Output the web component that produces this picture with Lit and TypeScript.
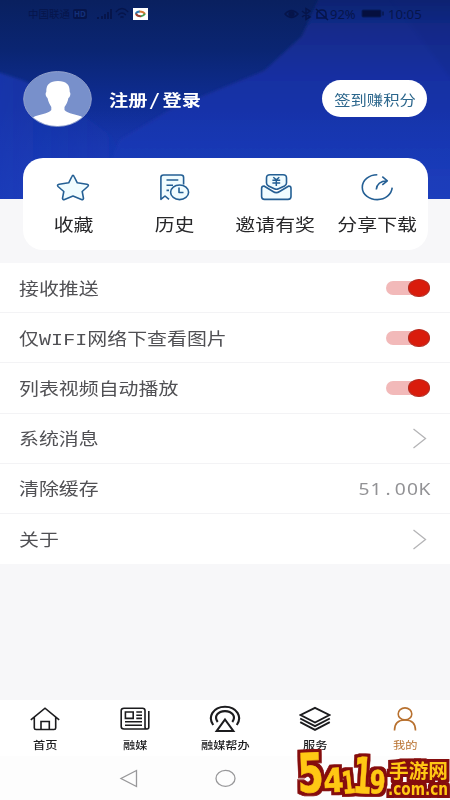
import { LitElement, html, svg, css } from "lit";
import { customElement, property } from "lit/decorators.js";
import { classMap } from "lit/directives/class-map.js";

const starIcon = html`<svg width="34" height="28" viewBox="0 0 34 28">
  <path class="soft" d="M17 2.4 Q17.6 2.4 18.1 3.5 L21.3 9.8 L30.8 11.2 Q33.4 12 31.8 13.5 L26.2 18.5 L27.5 25.4 Q27.3 27.2 25.4 26.4 L17 23 L8.6 26.4 Q6.7 27.2 6.5 25.4 L7.8 18.5 L2 13.5 Q0.6 12 3.2 11.2 L12.7 9.8 L15.9 3.5 Q16.4 2.4 17 2.4Z"/></svg>`;
const historyIcon = html`<svg width="34" height="28" viewBox="0 0 34 28">
  <path class="soft" d="M12 26.4 L8 23 L3.9 26.3 V4.5 Q3.9 2 6.5 2 H24 Q26.6 2 26.6 4.5 V11.5"/>
  <path class="soft" d="M9.5 7 H21.3 M9.5 12.2 H16 M9.5 17.4 H12"/>
  <ellipse class="soft" cx="22.6" cy="19.3" rx="9" ry="7.3"/>
  <path class="soft" d="M22 14.6 V19.5 H26.5"/></svg>`;
const inviteIcon = html`<svg width="34" height="28" viewBox="0 0 34 28">
  <path class="soft" d="M5 13 Q2.6 13 2.6 15.5 V23.5 Q2.6 26.4 5.5 26.4 H29 Q32 26.4 32 23.5 V15.5 Q32 13 29.8 13 L20.6 18.5 Q17.3 20.8 14 18.5Z"/>
  <path class="soft" d="M9.5 13 Q7.5 12 7.5 10 V5 Q7.5 1.8 11 1.8 H24 Q27.5 1.8 27.5 5 V10 Q27.5 12 25.5 13 L19.5 15.8 Q17.4 16.8 15.3 15.8Z"/>
  <path class="yen" d="M14.3 4.2 L17.3 6.8 L20.3 4.2 M13.4 7.3 H21.2 M13.4 10 H21.2 M17.3 7 V13"/></svg>`;
const shareIcon = html`<svg width="34" height="28" viewBox="0 0 34 28">
  <path class="line" d="M17.3 1.8 C8.8 1.8 2.3 7.3 2.3 14.4 C2.3 21.3 9 26.6 17.3 26.6 C25.5 26.6 31.4 21.6 32.2 14.7"/>
  <path class="line" d="M16.3 16.5 C16.8 11 19.6 8.3 27 7.8 M22.3 3.7 L27.3 7.8 L22.3 11.8"/></svg>`;

const homeIcon = html`<svg width="32" height="28" viewBox="0 0 32 28">
  <path d="M1.8 14.8 L16 3.2 L30.2 14.8 M5.3 12.5 V23 Q5.3 24.5 7 24.5 H25 Q26.7 24.5 26.7 23 V12.5 M12 24.5 V16.5 H20.3 V24.5"/></svg>`;
const newsIcon = html`<svg width="32" height="28" viewBox="0 0 32 28">
  <path d="M27 24 H5 Q2.2 24 2.2 21.5 V5.5 Q2.2 3.2 5 3.2 H23.5 Q26 3.2 26 5.5 V22 Q26 24 28 24 Q29.8 24 29.8 22 V6"/>
  <path d="M6.4 7 H14.2 V13.4 H6.4Z M17.3 7 H23 M17.3 10.2 H23 M17.3 13.4 H23 M6 16.8 H23 M6 20.3 H23"/></svg>`;
const castIcon = html`<svg width="32" height="28" viewBox="0 0 32 28">
  <path class="bold" d="M4.2 20 C-1.5 12 4 1.8 16 1.8 C28 1.8 33.5 12 27.8 20"/>
  <path class="bold" d="M8.7 17 C4.5 11.5 9 6.1 16 6.1 C23 6.1 27.5 11.5 23.3 17"/>
  <path class="bold" d="M16 14.5 L24.3 26 H7.7Z"/></svg>`;
const layersIcon = html`<svg width="32" height="28" viewBox="0 0 32 28">
  <path class="mid" d="M16 2.8 L30.4 10 L16 17.5 L1.6 10Z M1.2 13.5 L16 21.2 L30.8 13.5 M1.2 17.2 L16 24.9 L30.8 17.2"/></svg>`;
const userIcon = html`<svg width="32" height="28" viewBox="0 0 32 28">
  <ellipse cx="16" cy="8.9" rx="6.8" ry="6"/><path d="M5.5 25.4 C5.5 18.4 9.8 15 16 15 C22.2 15 26.5 18.4 26.5 25.4"/></svg>`;

/* Half-width characters sit in cells of one fixed width. */
const cells = (t: string) =>
  [...t].map((c) => (c.charCodeAt(0) < 128 ? html`<i class="cell">${c}</i>` : c));

@customElement("setting-row")
class SettingRow extends LitElement {
  @property() label = "";
  @property() kind = "arrow";
  @property() value = "";
  static styles = css`
    :host { display: flex; align-items: center; justify-content: space-between; height: 50.3px;
      box-sizing: border-box; border-bottom: 1px solid #f3f3f5; padding: 0 19px 0 19px; color: #505054; }
    :host(:last-of-type) { border-bottom: 0; }
    .label { font-size: 16.6px; transform: scaleX(1.2); transform-origin: left; white-space: nowrap; }
    .cell { font-style: normal; display: inline-block; width: 10.1px; text-align: center; font-family: "Liberation Mono", monospace; }
    .value { font-size: 16px; color: #929295; transform: scaleX(1.2); transform-origin: right; white-space: nowrap; }
    .value .cell { font-family: "Noto Sans", sans-serif; }
    .toggle { display: flex; justify-content: flex-end; align-items: center; width: 44px; height: 14px;
      margin-right: 1px; border-radius: 7px; background: #f2b9b9; }
    .knob { width: 22.5px; height: 18px; flex: none; border-radius: 50%; background: #d91c0c; border: 1px solid #b32b20; box-sizing: border-box; }
    svg { margin-right: 4px; fill: none; stroke: #b4b4b6; stroke-width: 1.3; }
  `;
  render() {
    const end =
      this.kind === "switch" ? html`<span class="toggle"><span class="knob"></span></span>`
      : this.kind === "value" ? html`<span class="value">${cells(this.value)}</span>`
      : html`<svg width="15" height="22" viewBox="0 0 15 22"><path d="M1.5 2 L13.5 11.5 L1.5 21"/></svg>`;
    return html`<span class="label">${cells(this.label)}</span>${end}`;
  }
}

@customElement("app-root")
class AppRoot extends LitElement {
  static styles = css`
    :host { display: flex; flex-direction: column; position: relative; width: 450px; height: 800px; overflow: hidden;
      background: #f7f7f9; font-family: "Noto Sans CJK SC", sans-serif; }
    .hero { position: relative; height: 199px; flex: none; }
    .sky { position: absolute; left: 0; top: 0; }
    .status { position: relative; display: flex; height: 27px; align-items: center; color: #06154b; font: 13px "Noto Sans", "Noto Sans CJK SC", sans-serif; }
    .status svg { display: block; flex: none; }
    .carrier { margin-left: 28px; width: 42px; font-size: 10.5px; white-space: nowrap; }
    .hd { width: 14px; height: 10px; margin-left: 3px; background: #06154b; color: #13317b; border-radius: 2px; font: bold 8px/10px "Noto Sans"; text-align: center; }
    .signal { margin-left: 10px; }
    .wifi { margin-left: 3px; }
    .app { margin-left: 4px; }
    .sright { margin-left: 136px; }
    .pct { width: 31px; font-size: 13px; }
    .time { margin-left: 2px; font-size: 13.2px; }
    .profile { position: relative; display: flex; align-items: center; height: 57px; margin-top: 43px; padding: 0 23px; }
    .login { margin-left: 16px; width: 93px; color: #fff; font-size: 16px; font-weight: 600; }
    .slash { display: inline-block; width: 12.6px; text-align: center; font-style: normal; transform: skewX(-8deg); }
    .wide { display: inline-block; transform: scaleX(1.2); transform-origin: left; white-space: nowrap; }
    .checkin { display: flex; align-items: center; justify-content: center; width: 105px; height: 37px; margin-left: auto;
      border-radius: 19px; background: #fff; color: #2b668c; font-size: 13.6px; }
    .checkin .wide { transform-origin: center; }
    .card { position: relative; z-index: 1; display: grid; grid-template-columns: repeat(4, 1fr); height: 92px; margin: -41px 22px 0 23px;
      border-radius: 20px; background: #fff; flex: none; }
    .action { display: flex; flex-direction: column; align-items: center; padding: 15px 1px 0 0; color: #272729; font-size: 16.6px; line-height: 24px; gap: 11px; }
    .action .wide { transform-origin: center; }
    .action svg { fill: none; stroke: #245f94; stroke-width: 1.6; stroke-linejoin: round; }
    .action .soft { fill: #f0fcff; }
    .action .yen { stroke-width: 1.5; }
    .list { display: flex; flex-direction: column; margin-top: 13px; background: #fff; height: 301px; flex: none; }
    .tabs { display: grid; grid-template-columns: repeat(5, 1fr); height: 56px; margin-top: auto; background: #fff; flex: none; }
    .tab { display: flex; flex-direction: column; align-items: center; padding-top: 5px; color: #1c1c1e; font-size: 10.2px; line-height: 15px; gap: 4px; font-weight: 500; }
    .tab.active { color: #b8712f; font-weight: 400; }
    .tab .wide { transform-origin: center; }
    .tab svg { fill: none; stroke: currentColor; stroke-width: 1.6; }
    .tab .bold { stroke-width: 2.1; }
    .tab .mid { stroke-width: 1.9; }
    .nav { display: flex; align-items: center; height: 44px; background: #fdfdfd; flex: none; }
    .nav svg { fill: none; stroke: #98989a; stroke-width: 1.3; }
    .back { margin-left: 119px; }
    .homebtn { margin-left: 76px; }
    .mark { position: absolute; left: 296px; top: 744px; overflow: visible; }
    .mark text { font-family: "DejaVu Sans", "Noto Sans CJK SC", sans-serif; font-weight: 700; fill: #ffc814; }
    .mark .digit { stroke: #ffc814; stroke-width: .6; }
  `;
  render() {
    const actions: [string, unknown][] = [["收藏", starIcon], ["历史", historyIcon], ["邀请有奖", inviteIcon], ["分享下载", shareIcon]];
    const tabs: [string, unknown][] = [["首页", homeIcon], ["融媒", newsIcon], ["融媒帮办", castIcon], ["服务", layersIcon], ["我的", userIcon]];
    const rows = [["接收推送", "switch"], ["仅WIFI网络下查看图片", "switch"], ["列表视频自动播放", "switch"], ["系统消息", "arrow"], ["清除缓存", "value", "51.00K"], ["关于", "arrow"]];
    /* glyph, x, baseline, size, horizontal scale, slant */
    const digits: [string, number, number, number, number, number][] = [
      ["5", 2, 48.5, 54, 0.7, -2], ["4", 28, 48.5, 33, 0.88, -3], ["1", 47, 50, 31, 0.62, -6], ["1", 56, 48.5, 50, 0.55, 4], ["9", 73, 49, 32, 0.72, 3],
    ];
    return html`
      <div class="hero">
        <svg class="sky" width="450" height="199" viewBox="0 0 450 199">
          <defs>
            <linearGradient id="a" x1="0" y1="0" x2="0" y2="1"><stop offset="0" stop-color="#09205f"/><stop offset=".25" stop-color="#0a2572"/><stop offset=".5" stop-color="#0e2c91"/><stop offset=".75" stop-color="#1634ab"/><stop offset="1" stop-color="#1c3dbd"/></linearGradient>
            <linearGradient id="b" x1="0" y1="0" x2="0" y2="1"><stop offset="0" stop-color="#0d2069"/><stop offset=".17" stop-color="#122b8a"/><stop offset=".4" stop-color="#162fa2"/><stop offset=".75" stop-color="#1937b2"/><stop offset="1" stop-color="#1a3db9"/></linearGradient>
            <linearGradient id="c" x1="0" y1="0" x2="1" y2="0"><stop offset="0" stop-color="#1737b0" stop-opacity=".9"/><stop offset="1" stop-color="#1737b0" stop-opacity="0"/></linearGradient>
            <linearGradient id="d" x1="0" y1="0" x2="0" y2="1"><stop offset="0" stop-color="#1c3fc0" stop-opacity="0"/><stop offset="1" stop-color="#1c3fc0" stop-opacity=".5"/></linearGradient>
            <filter id="s" x="-10%" y="-10%" width="120%" height="120%"><feGaussianBlur stdDeviation="1.5"/></filter>
          </defs>
          <rect width="450" height="199" fill="url(#a)"/>
          <path filter="url(#s)" d="M-9 70 L22 80 L60 98 L110 135 L150 210 H-9Z" fill="url(#c)"/>
          <path filter="url(#s)" d="M322 -9 L302 36 L264 71 L225 87 L170 110 L120 140 L90 210 H470 V-9Z" fill="url(#b)"/>
          <path d="M0 110 H450 V199 H0Z" fill="url(#d)"/>
          <path filter="url(#s)" d="M385 -9 L460 90 V-9Z" fill="#0c2377" opacity=".15"/>
        </svg>
        <div class="status">
          <span class="carrier">中国联通</span><span class="hd">HD</span>
          <svg class="signal" width="15" height="12" viewBox="1 0 15 12" fill="#06154b"><path d="M1 9h2v2H1zM5 8h2v3H5zM8 6h2v5H8zM11 4h2v7h-2zM14 1h2v10h-2z"/></svg>
          <svg class="wifi" width="14" height="13" viewBox="1 0 18 13" preserveAspectRatio="none" fill="none" stroke="#06154b" stroke-width="1.6"><path d="M2 5Q10-2 18 5M5 8q5-4 10 0M8 10.5q2-1.5 4 0"/></svg>
          <svg class="app" width="15" height="12" viewBox="0 0 15 12"><rect width="15" height="12" fill="#fff"/><path d="M3 6Q3 3.4 7 3.4" fill="none" stroke="#2f7eb5" stroke-width="2"/><path d="M6.5 3.4Q10.5 3.4 12 6" fill="none" stroke="#d67835" stroke-width="2"/><path d="M3 5.6Q4 8.4 8 8.2" fill="none" stroke="#9b4030" stroke-width="2"/><path d="M8 8.2Q10.5 8 12 5.8" fill="none" stroke="#4b9c52" stroke-width="2"/></svg>
          <svg class="sright" width="46" height="14" viewBox="0 0 46 14" fill="none" stroke="#06154b" stroke-width="1.5"><path d="M1 7Q7.5 0 14 7Q7.5 14 1 7Z"/><circle cx="7.5" cy="7" r="2.4" fill="#06154b"/><path d="M18 4L26 10L22 12.5V1.5L26 4L18 10M33 11V6Q34 3 38 3Q42 3 42 7V11ZM32 2L44 13"/></svg>
          <span class="pct">92%</span>
          <svg width="25" height="9" viewBox="0 0 25 9"><rect x="1" y="1" width="19" height="7" rx="1" fill="#050f3e" stroke="#071a58"/><path d="M22 2.5v4" stroke="#071a58" stroke-width="2"/></svg>
          <span class="time">10:05</span>
        </div>
        <div class="profile">
          <svg width="70" height="57" viewBox="0 0 70 57"><defs><clipPath id="e"><ellipse cx="34.5" cy="29" rx="33.4" ry="27"/></clipPath></defs>
            <ellipse cx="34.5" cy="29" rx="33.8" ry="27.4" fill="#7890cb" stroke="#92a1cc" stroke-width="1"/>
            <path clip-path="url(#e)" fill="#fff" d="M35 11 C26.5 11 23 15 23.3 22 C21.8 23.5 23 27 24.5 28 C25.2 32 27.2 35 28.3 37 V40 C26 44 15 44 10 47.5 L8 57 H62 L60 47.5 C55 44 44 44 41.5 40 V37 C43 35 44.8 32 45.4 28 C47 27 48.2 23.5 46.7 22 C47 15 43.5 11 35 11Z"/></svg>
          <span class="login"><span class="wide">注册<i class="slash">/</i>登录</span></span>
          <span class="checkin"><span class="wide">签到赚积分</span></span>
        </div>
      </div>
      <div class="card">${actions.map(([t, i]) => html`<div class="action">${i}<span class="wide">${t}</span></div>`)}</div>
      <div class="list">${rows.map(([l, k, v]) => html`<setting-row label=${l} kind=${k} value=${v ?? ""}></setting-row>`)}</div>
      <div class="tabs">${tabs.map(([t, i], n) => html`<div class=${classMap({ tab: true, active: n === 4 })}>${i}<span class="wide">${t}</span></div>`)}</div>
      <div class="nav">
        <svg class="back" width="20" height="20" viewBox="0 0 20 20"><path d="M17.5 2.5 V18.5 L2 10.5Z"/></svg>
        <svg class="homebtn" width="22" height="20" viewBox="0 0 22 20"><ellipse cx="10.5" cy="10.4" rx="9.5" ry="8"/></svg>
      </div>
      <svg class="mark" width="154" height="56" viewBox="0 0 154 56">
        <defs><filter id="rim" filterUnits="userSpaceOnUse" x="-5" y="-5" width="165" height="65" color-interpolation-filters="sRGB">
          <feMorphology in="SourceAlpha" operator="dilate" radius="2.5" result="fat"/>
          <feFlood flood-color="#850d0d"/><feComposite in2="fat" operator="in" result="edge"/>
          <feMerge><feMergeNode in="edge"/><feMergeNode in="SourceGraphic"/></feMerge></filter></defs>
        <g filter="url(#rim)">
          ${digits.map(([c, x, y, s, k, r]) => svg`<text class="digit" font-size=${s} transform="translate(${x} ${y}) rotate(${r}) scale(${k} 1)">${c}</text>`)}
          <text x="93" y="33.5" font-size="19.5" textLength="59" lengthAdjust="spacingAndGlyphs">手游网</text>
          <text x="92" y="51" font-size="17" textLength="60" lengthAdjust="spacingAndGlyphs">.com.cn</text>
        </g>
      </svg>`;
  }
}
